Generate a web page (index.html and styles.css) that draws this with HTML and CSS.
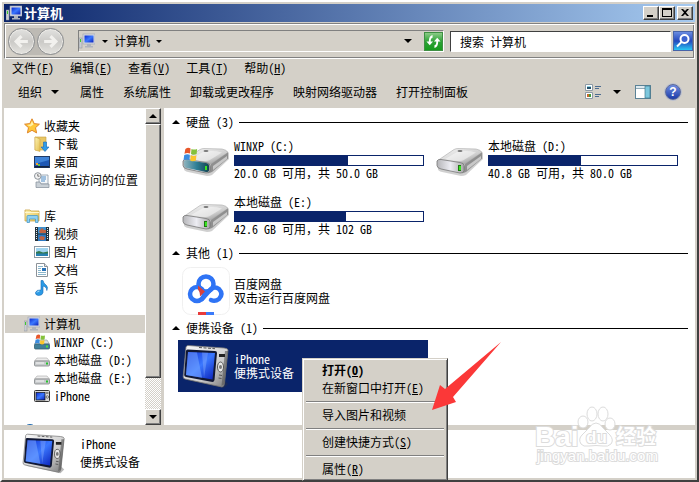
FILE: index.html
```html
<!DOCTYPE html>
<html lang="zh-CN">
<head>
<meta charset="UTF-8" />
<title>计算机</title>
<link rel="stylesheet" href="styles.css">
</head>
<body>

<!-- Shared icon symbols -->
<svg class="sprite" width="0" height="0" aria-hidden="true">
  <defs>
    <linearGradient id="screen" x1="0" y1="0" x2="1" y2="1">
      <stop offset="0" stop-color="#0d2bd0" /><stop offset=".5" stop-color="#3b78ff" /><stop offset="1" stop-color="#0a20b8" />
    </linearGradient>
    <linearGradient id="metal" x1="0" y1="0" x2="1" y2="1">
      <stop offset="0" stop-color="#fafafa" /><stop offset=".6" stop-color="#cfcfcf" /><stop offset="1" stop-color="#777" />
    </linearGradient>
    <linearGradient id="front" x1="0" y1="0" x2="1" y2="0">
      <stop offset="0" stop-color="#b5b5b8" /><stop offset=".5" stop-color="#ededf3" /><stop offset="1" stop-color="#a8a8a8" />
    </linearGradient>
    <linearGradient id="teal" x1="0" y1="0" x2="1" y2="0">
      <stop offset="0" stop-color="#8fb3bd" /><stop offset=".5" stop-color="#2f7f96" /><stop offset="1" stop-color="#144450" />
    </linearGradient>
    <linearGradient id="gold" x1="0" y1="0" x2="1" y2="1">
      <stop offset="0" stop-color="#fdf3b4" /><stop offset="1" stop-color="#e3bd4c" />
    </linearGradient>
  </defs>

  <symbol id="i-computer" viewBox="0 0 16 16">
    <rect x="0" y="5" width="3" height="10" fill="#c9ccd2" stroke="#8b8f96" stroke-width=".5" />
    <rect x="1" y="6" width="1" height="3" fill="#3ecb2c" />
    <rect x="4" y="1" width="12" height="10" fill="#d7dae2" stroke="#9aa0b0" stroke-width=".6" />
    <rect x="5.500" y="2.500" width="9" height="7" fill="url(#screen)" />
    <path d="M8 11h4v2h2v1.500H6V13h2z" fill="#aeb3bd" />
  </symbol>

  <symbol id="i-star" viewBox="0 0 16 16">
    <path d="M8 .8l2.200 4.800 5.200.6-3.900 3.500 1.100 5.200L8 12.300l-4.600 2.600 1.100-5.200L.6 6.200l5.200-.6z" fill="#ffc83a" stroke="#e0862a" />
    <path d="M8 3l1.500 3.500-3 2L3 7l3.400-.6z" fill="#fff0a8" />
  </symbol>

  <symbol id="i-download" viewBox="0 0 16 16">
    <path d="M1 1h11v13H1z" fill="#e9c765" stroke="#c89f3e" stroke-width=".6" />
    <path d="M1 1l5 2v12.500L1 14z" fill="url(#gold)" stroke="#c89f3e" stroke-width=".5" />
    <path d="M9.500 6h3v5H15l-4 4.500L7 11h2.500z" fill="#2f9be8" stroke="#1767b5" stroke-width=".6" />
  </symbol>

  <symbol id="i-desktop" viewBox="0 0 16 16">
    <rect x=".5" y="2.500" width="15" height="11" fill="#1d57b4" stroke="#203a66" />
    <path d="M1 3h14v3L1 10z" fill="#3f83d8" />
    <path d="M1 12h14v1.500H1z" fill="#14233f" />
    <path d="M2 9h2v2H2z" fill="#f4a02c" /><path d="M4 10h2v2H4z" fill="#5cc043" />
  </symbol>

  <symbol id="i-recent" viewBox="0 0 16 16">
    <path d="M5 3h9v9H5z" fill="#f4f7fa" stroke="#8d99a6" stroke-width=".8" />
    <path d="M7 5h5M7 7h5M7 9h4" stroke="#4e8cc6" />
    <path d="M2 10h4l1 2h8v3.500H2z" fill="#c9d0d6" stroke="#828d98" stroke-width=".7" />
    <circle cx="3.800" cy="4" r="3.300" fill="#f2f2f2" stroke="#8d949b" />
    <path d="M3.800 2v2.200h1.700" fill="none" stroke="#555" stroke-width=".8" />
  </symbol>

  <symbol id="i-library" viewBox="0 0 16 16">
    <path d="M1 2h5l1 1h8v10H1z" fill="url(#gold)" stroke="#cda545" stroke-width=".8" />
    <path d="M1 4.500h14" stroke="#fff7cf" />
    <path d="M3 14.500V8.500q0-1 1-1h9q1 0 1 1v6h-2.500V11h-6v3.500z" fill="#8fd0f2" stroke="#3c93c7" stroke-width=".7" />
  </symbol>

  <symbol id="i-video" viewBox="0 0 16 16">
    <rect x="1" y="1" width="14" height="14" fill="#25333d" />
    <rect x="4" y="1" width="8" height="6.500" fill="#3f91cf" /><rect x="4" y="8.500" width="8" height="6.500" fill="#2c79c3" />
    <path d="M5 5l3-3 2 2 2 0v3H6zM5 12l2-2 4 1-1 3H7z" fill="#c26342" />
    <path d="M2.500 2v12M13.500 2v12" stroke="#e4ecef" stroke-dasharray="1 1" />
  </symbol>

  <symbol id="i-picture" viewBox="0 0 16 16">
    <rect x=".5" y="2.500" width="15" height="11" fill="#fff" stroke="#8b98a3" />
    <rect x="2" y="4" width="12" height="8" fill="#9fd4f0" />
    <path d="M2 8l3-1 4 1.500 5-1V10H2z" fill="#33794f" /><path d="M2 9.500h12V12H2z" fill="#2781b2" />
  </symbol>

  <symbol id="i-document" viewBox="0 0 16 16">
    <path d="M2.500 1.500h8l3 3v10h-11z" fill="#fff" stroke="#8c9298" />
    <path d="M10.500 1.500v3h3" fill="#dfe5ea" stroke="#8c9298" />
    <path d="M4 4.500h5M4 6.500h3M4 8.500h3M4 10.500h8M4 12.500h8" stroke="#8bb6cb" />
    <rect x="8" y="6" width="4" height="3" fill="#2973b8" />
  </symbol>

  <symbol id="i-music" viewBox="0 0 16 16">
    <path d="M7 .5h2q.5 3 3 4.500 2.500 2 .8 5.500Q13 7 9 6v6.500q-.5 3-4.500 3Q1 15 1.500 12.500 2.500 9.500 7 10z" fill="#2b9be6" stroke="#1769b5" stroke-width=".6" />
    <path d="M3 12.500q.5-1.500 2.500-1.500" fill="none" stroke="#b9e4ff" />
  </symbol>

  <symbol id="i-flag" viewBox="0 0 16 16">
    <path d="M2 2q3-2 5.500-.5L7 7Q4 5.800 1 7.300z" fill="#e8572a" />
    <path d="M8.500 2q3 1.300 6 0L14 7.500q-3 1.500-6 0z" fill="#84c13b" />
    <path d="M.8 8.500q3-1.500 6-.3L6.300 14Q3 12.500 0 14z" fill="#3b8ce0" />
    <path d="M7.800 8.700q3 1.500 6 .2L13.200 14.500q-3 1.500-6-.2z" fill="#fbc52c" />
  </symbol>

  <symbol id="i-drive" viewBox="0 0 16 16">
    <path d="M3 6h10l2.500 3H.5z" fill="#ececec" stroke="#aaa" stroke-width=".6" />
    <rect x=".5" y="9" width="15" height="5" rx="1" fill="#c7cacc" stroke="#808486" stroke-width=".8" />
    <path d="M2 11h8" stroke="#f7f7f7" /><rect x="12" y="10.500" width="2" height="2" fill="#24c32a" />
  </symbol>

  <symbol id="i-windrive" viewBox="0 0 16 16">
    <path d="M3 6h10l2.500 4H.5z" fill="#d4dde1" stroke="#8c979c" stroke-width=".6" />
    <rect x=".5" y="10" width="15" height="5" rx="1" fill="#407f99" stroke="#365e6e" stroke-width=".8" />
    <rect x="12" y="11.500" width="2" height="2" fill="#4be03d" />
    <use href="#i-flag" x="1" y="0" width="11" height="11" />
  </symbol>

  <symbol id="i-player" viewBox="0 0 16 16">
    <rect x=".5" y="2.500" width="15" height="11" rx="1" fill="#dadada" stroke="#333" />
    <rect x="2" y="4.500" width="9" height="7.500" fill="url(#screen)" stroke="#111" stroke-width=".7" />
    <circle cx="13.300" cy="9" r="1.200" fill="#fff" stroke="#333" stroke-width=".7" /><path d="M12 5h2.500" stroke="#333" />
  </symbol>

  <symbol id="i-network" viewBox="0 0 16 16">
    <circle cx="6" cy="7" r="6.500" fill="#3690e3" stroke="#2169ae" />
  </symbol>

  <symbol id="b-drive" viewBox="0 0 48 48">
    <path d="M2 30l17-15q2-1 5-1h17q4 0 6 3v6L30 39q-2 1-5 1L6 36q-4-1-4-3z" fill="#777" opacity=".35" />
    <path d="M1 25l17-11.500q2-1 4-1l18 .5q4 .5 6 3.500L29 28q-2 1-5 1z" fill="url(#metal)" stroke="#aaa" stroke-width=".6" />
    <path d="M9 23l12-7q10-2 19 .5L27 24.500q-9 1.500-18-1.500z" fill="#fff" opacity=".45" />
    <path d="M29 28l17-11.500v6L30 36q-2 1-4 1z" fill="#8f8f8f" />
    <path d="M31 30l14-10v3L31 34z" fill="#c8c8c8" />
    <path d="M1 25q1-2 4-1.500l19 3q4 .5 4 3v5q0 3-4 2.500l-19-4q-4-1-4-3.500z" fill="url(#front)" stroke="#777" stroke-width=".8" />
    <rect x="22" y="29" width="3" height="6" fill="#1f7713" /><rect x="23" y="30" width="2" height="4" fill="#3ae321" />
    <ellipse cx="24" cy="15" rx="2.500" ry="1" fill="#777" />
  </symbol>

  <symbol id="b-player" viewBox="0 0 48 48">
    <path d="M4 38l38 8 4-4-3-3z" fill="#333" opacity=".35" />
    <path d="M4 5q.5-1.500 2-1.500L42 6q4 .5 4 2l-3.500 33q-.5 4-2.500 4L3 37q-2-.5-1.800-2.500z" fill="url(#metal)" stroke="#777" stroke-width=".8" />
    <path d="M43 9h3l-3.500 33-3 2z" fill="#555" opacity=".6" />
    <path d="M4 9q0-1.500 1.500-1.500L33 9q2 0 2 2l-2.500 27q-.5 2-2 2L4 35q-2-.5-1.800-2z" fill="#111834" />
    <path d="M6 10l27 1-2.500 26.500L4 33z" fill="url(#screen)" />
    <path d="M6 10l9 .4 5 25.300L4 33z" fill="#79a7ff" opacity=".55" />
    <path d="M20 10.600l6 .2-4 25z" fill="#a8c6ff" opacity=".3" />
    <path d="M17 5.500l16 1.200" stroke="#555" stroke-width="1" stroke-dasharray="3 1.500" />
    <rect x="37" y="12" width="6" height="3" fill="#222" />
    <ellipse cx="38.500" cy="25" rx="3" ry="5" fill="#e9e9e9" stroke="#555" /><ellipse cx="38.500" cy="25" rx="1.500" ry="2" fill="#777" />
    <path d="M37 33l3 .5M36.500 36l3 .5" stroke="#555" />
  </symbol>
</svg>

<div class="window">

  <header class="titlebar">
    <svg class="icon"><use href="#i-computer" /></svg>
    <h1>计算机</h1>
    <div class="window-buttons">
      <button type="button" aria-label="最小化"><svg viewBox="0 0 12 10"><path d="M2 7h6v2H2z" /></svg></button>
      <button type="button" aria-label="最大化"><svg viewBox="0 0 12 10"><path d="M1 0h10v9H1zM2 2v6h8V2z" fill-rule="evenodd" /></svg></button>
      <button type="button" class="close" aria-label="关闭"><svg viewBox="0 0 12 10"><path d="M2 1h2l2 2 2-2h2L7 4.500 10 8H8L6 6 4 8H2l3-3.500z" /></svg></button>
    </div>
  </header>

  <!-- Back / forward, address and search -->
  <div class="navbar">
    <div class="history">
      <button type="button" aria-label="后退"><svg viewBox="0 0 16 16"><path d="M8 3L3 8l5 5M4 8h10" /></svg></button>
      <button type="button" aria-label="前进"><svg viewBox="0 0 16 16"><path d="M8 3l5 5-5 5M2 8h10" /></svg></button>
    </div>
    <div class="address">
      <svg class="icon"><use href="#i-computer" /></svg>
      <span class="caret"></span>
      <a href="#">计算机</a>
      <span class="caret"></span>
      <button type="button" class="drop" aria-label="以前的位置"><span class="caret large"></span></button>
      <button type="button" class="refresh" aria-label="刷新">
        <svg viewBox="0 0 16 16"><path d="M7 1v3q-2 0-2 4h2.500L4 12 .5 8H3q0-6 4-7zM9 15v-3q2 0 2-4H8.500L12 4l3.500 4H13q0 6-4 7z" fill="#fff" /></svg>
      </button>
    </div>
    <form class="search">
      <input type="text" placeholder="搜索 计算机" aria-label="搜索 计算机">
      <button type="button" aria-label="搜索">
        <svg viewBox="0 0 16 16"><circle cx="9.500" cy="6" r="4" /><path d="M6.500 9L2 13.500" /></svg>
      </button>
    </form>
  </div>

  <nav class="menubar">
    <a href="#">文件(<u>F</u>)</a>
    <a href="#">编辑(<u>E</u>)</a>
    <a href="#">查看(<u>V</u>)</a>
    <a href="#">工具(<u>T</u>)</a>
    <a href="#">帮助(<u>H</u>)</a>
  </nav>

  <div class="toolbar">
    <button type="button" class="organize">组织<span class="caret large"></span></button>
    <button type="button">属性</button>
    <button type="button">系统属性</button>
    <button type="button">卸载或更改程序</button>
    <button type="button">映射网络驱动器</button>
    <button type="button">打开控制面板</button>
    <div class="tools">
      <button type="button" class="view" aria-label="更改视图">
        <svg class="icon" viewBox="0 0 16 16">
          <path d="M.5.500h7v6h-7zM.5 8.500h7v6h-7z" fill="#fff" stroke="#8c9aa5" />
          <path d="M2 2h4v1H2z" fill="#8fd2e6" /><path d="M2 3h4v2H2z" fill="#24506a" />
          <path d="M2 10h2v3H2z" fill="#c8672a" /><path d="M4 10h2v3H4z" fill="#3f9a3a" />
          <path d="M10 2.500h6M10 4.500h4M10 10.500h6M10 12.500h4" stroke="#4d6c90" />
        </svg>
        <span class="caret large"></span>
      </button>
      <button type="button" aria-label="预览窗格">
        <svg class="icon" viewBox="0 0 16 16">
          <rect x=".5" y="1.500" width="15" height="13" fill="#fff" stroke="#5b8296" />
          <path d="M1 2h9v2H1z" fill="#dfeaf0" /><path d="M1 4.500h9" stroke="#8fa9b6" />
          <path d="M10 2h5v12h-5z" fill="#7cc7dd" stroke="#41788e" stroke-width=".7" />
        </svg>
      </button>
      <button type="button" class="help" aria-label="帮助">?</button>
    </div>
  </div>

  <div class="main">
    <!-- Navigation tree -->
    <nav class="tree">
      <ul>
        <li><a href="#"><svg class="icon"><use href="#i-star" /></svg>收藏夹</a>
          <ul>
            <li><a href="#"><svg class="icon"><use href="#i-download" /></svg>下载</a></li>
            <li><a href="#"><svg class="icon"><use href="#i-desktop" /></svg>桌面</a></li>
            <li><a href="#"><svg class="icon"><use href="#i-recent" /></svg>最近访问的位置</a></li>
          </ul>
        </li>
        <li><a href="#"><svg class="icon"><use href="#i-library" /></svg>库</a>
          <ul>
            <li><a href="#"><svg class="icon"><use href="#i-video" /></svg>视频</a></li>
            <li><a href="#"><svg class="icon"><use href="#i-picture" /></svg>图片</a></li>
            <li><a href="#"><svg class="icon"><use href="#i-document" /></svg>文档</a></li>
            <li><a href="#"><svg class="icon"><use href="#i-music" /></svg>音乐</a></li>
          </ul>
        </li>
        <li><a href="#" class="current"><svg class="icon"><use href="#i-computer" /></svg>计算机</a>
          <ul>
            <li><a href="#"><svg class="icon"><use href="#i-windrive" /></svg>WINXP (C:)</a></li>
            <li><a href="#"><svg class="icon"><use href="#i-drive" /></svg>本地磁盘 (D:)</a></li>
            <li><a href="#"><svg class="icon"><use href="#i-drive" /></svg>本地磁盘 (E:)</a></li>
            <li><a href="#"><svg class="icon"><use href="#i-player" /></svg>iPhone</a></li>
          </ul>
        </li>
        <li><a href="#"><svg class="icon"><use href="#i-network" /></svg></a></li>
      </ul>
    </nav>
    <div class="scrollbar">
      <button type="button" aria-label="向上滚动"><span class="caret large up"></span></button>
      <div class="thumb"></div>
      <div class="track"></div>
      <button type="button" aria-label="向下滚动"><span class="caret large"></span></button>
    </div>

    <!-- Drives and devices -->
    <main class="content">
      <h2><span class="caret large up"></span>硬盘 (3)</h2>
      <div class="items">
        <div class="item">
          <svg class="big" viewBox="0 0 48 48">
            <use href="#b-drive" />
            <path d="M2 25q1-1 3-1l19 3q3 .5 3 3v4q0 2-3 2l-19-4q-3-.5-3-3z" fill="url(#teal)" />
            <rect x="23" y="30" width="2" height="4" fill="#3ae321" />
            <use href="#i-flag" x="1" y="11" width="16" height="15" />
          </svg>
          <div class="info">
            <p>WINXP (C:)</p>
            <div class="bar"><div class="used" style="width: 60%"></div></div>
            <p>20.0 GB 可用<span class="wide">，</span>共 50.0 GB</p>
          </div>
        </div>
        <div class="item">
          <svg class="big"><use href="#b-drive" /></svg>
          <div class="info">
            <p>本地磁盘 (D:)</p>
            <div class="bar"><div class="used" style="width: 49%"></div></div>
            <p>40.8 GB 可用<span class="wide">，</span>共 80.0 GB</p>
          </div>
        </div>
        <div class="item">
          <svg class="big"><use href="#b-drive" /></svg>
          <div class="info">
            <p>本地磁盘 (E:)</p>
            <div class="bar"><div class="used" style="width: 59%"></div></div>
            <p>42.6 GB 可用<span class="wide">，</span>共 102 GB</p>
          </div>
        </div>
      </div>

      <h2><span class="caret large up"></span>其他 (1)</h2>
      <div class="items">
        <div class="item">
          <svg class="big" viewBox="0 0 48 48">
            <rect x=".5" y=".5" width="47" height="47" rx="8" fill="#fff" stroke="#f0f0f0" />
            <g fill="none" stroke-width="4.500" stroke-linecap="round" stroke="#2f74f5">
              <circle cx="24" cy="17" r="7.500" />
              <circle cx="15" cy="27" r="7" />
              <path d="M20 32l9-10q4-3 8 0 5 5 0 10-4 3-8 1" />
            </g>
            <path d="M16 18.500l7 6-5 5q0-5-2-7z" fill="#d8403a" />
            <path d="M16 45h8v3h-8z" fill="#e83b3b" /><path d="M24 45h8v3h-8z" fill="#3b7bfa" />
          </svg>
          <div class="info">
            <p>百度网盘</p>
            <p>双击运行百度网盘</p>
          </div>
        </div>
      </div>

      <h2><span class="caret large up"></span>便携设备 (1)</h2>
      <div class="items">
        <div class="item selected">
          <svg class="big"><use href="#b-player" /></svg>
          <div class="info">
            <p>iPhone</p>
            <p>便携式设备</p>
          </div>
        </div>
      </div>
    </main>
  </div>

  <footer class="details">
    <svg class="device"><use href="#b-player" /></svg>
    <div>
      <p>iPhone</p>
      <p>便携式设备</p>
    </div>
  </footer>
</div>

<!-- Context menu for the selected device -->
<div class="context-menu" role="menu">
  <button type="button" role="menuitem" class="default">打开(<u>O</u>)</button>
  <button type="button" role="menuitem">在新窗口中打开(<u>E</u>)</button>
  <hr>
  <button type="button" role="menuitem">导入图片和视频</button>
  <hr>
  <button type="button" role="menuitem">创建快捷方式(<u>S</u>)</button>
  <hr>
  <button type="button" role="menuitem">属性(<u>R</u>)</button>
</div>

<svg class="pointer" viewBox="0 0 70 70" aria-hidden="true">
  <path d="M0 68L8 43l5 4L69 0 21 55l3 5z" fill="#fb3838" />
</svg>

<svg class="watermark" viewBox="0 0 136 72" aria-hidden="true">
  <ellipse cx="62" cy="14" rx="5" ry="7" /><ellipse cx="73" cy="14" rx="5" ry="7" />
  <ellipse cx="53" cy="22" rx="5" ry="6" /><ellipse cx="80" cy="24" rx="5" ry="6" />
  <path d="M66 23q4 0 7 5l7 7q4 5 1 9-3 3-8 2-7-1-14 0-6 1-8-2-3-5 1-9l7-7q3-5 7-5z" />
  <text class="brand" x="5" y="46">Bai</text>
  <text class="brand du" x="56" y="43">du</text>
  <text class="brand cn" x="86" y="44">经验</text>
  <text class="site" x="7" y="61">jingyan.baidu.com</text>
</svg>

</body>
</html>
```

FILE: styles.css
```css
* {
  box-sizing: border-box;
}

body {
  margin: 0;
  position: relative;
  font-family: "Noto Sans CJK SC", sans-serif;
  font-feature-settings: "hwid"; /* half-width latin, as in a bitmap UI font */
  font-size: 12px;
  line-height: 18px;
  color: #000;
  background: #d4d0c8;
}

button {
  font: inherit;
  font-feature-settings: inherit;
  color: inherit;
  padding: 0;
  border: 0;
  background: none;
}

a {
  color: inherit;
  text-decoration: none;
}

p, h1, h2, ul {
  margin: 0;
  padding: 0;
}

ul {
  list-style: none;
}

.sprite {
  position: absolute;
}

.icon {
  width: 16px;
  height: 16px;
  flex: none;
}

.wide {
  font-feature-settings: normal;
}

/* Small triangles */
.caret {
  display: inline-block;
  flex: none;
  border: 3px solid transparent;
  border-top-color: #000;
  border-bottom: 0;
}

.caret.large {
  border-width: 4px;
  border-bottom: 0;
}

.caret.up {
  border-top: 0;
  border-bottom: 4px solid #000;
}

/* Window frame */
.window {
  height: 100vh;
  display: flex;
  flex-direction: column;
  padding: 2px;
  border: 2px solid;
  border-color: #fff #404040 #404040 #fff;
  background: #d4d0c8;
}

.titlebar {
  display: flex;
  align-items: center;
  gap: 2px;
  height: 18px;
  padding: 0 2px;
  color: #fff;
  background: linear-gradient(to right, #0a246a, #a6caf0);
}

.titlebar h1 {
  flex: 1;
  font-size: 13px;
  line-height: 18px;
}

.window-buttons {
  display: flex;
}

.window-buttons button {
  display: flex;
  width: 16px;
  height: 14px;
  padding: 1px;
}

.window-buttons svg {
  width: 12px;
  height: 10px;
}

.window-buttons .close {
  margin-left: 2px;
}

.window-buttons button,
.scrollbar button,
.thumb {
  border: 1px solid;
  border-color: #fff #404040 #404040 #fff;
  box-shadow: inset -1px -1px #808080;
  background: #d4d0c8;
}

/* Address row */
.navbar {
  display: flex;
  align-items: center;
  height: 36px;
  margin-top: 1px;
  padding: 0 1px 0 3px;
  border: 1px solid;
  border-color: #808080 #fff #fff #808080;
  box-shadow: inset 1px 1px #fff, inset -1px -1px #808080;
}

.history {
  display: flex;
  gap: 2px;
  margin-right: 14px;
  border-radius: 13px;
  background: #bdbab4;
}

.history button {
  width: 27px;
  height: 27px;
  padding: 4px;
  border: 1px solid #8e9092;
  border-radius: 50%;
  background: linear-gradient(#e2e2e0, #cbcac7 50%, #e4e3df);
  box-shadow: inset 0 0 0 1px #eceae6;
}

.history svg {
  display: block;
  fill: none;
  stroke: #f2f1ee;
  stroke-width: 3;
}

.address {
  flex: 1;
  display: flex;
  align-items: center;
  height: 22px;
  border: 1px solid;
  border-color: #808080 #fff #fff #808080;
}

.address .icon {
  margin-right: 7px;
}

.address a {
  margin: 0 6px;
}

.drop {
  display: flex;
  margin: 0 12px 0 auto;
}

.refresh {
  display: flex;
  width: 19px;
  height: 19px;
  padding: 1px;
  border: 1px solid #3f8f43;
  background: linear-gradient(#8bcb87, #2da236 50%, #169c1d);
}

.refresh svg {
  width: 15px;
  height: 15px;
}

.search {
  display: flex;
  align-items: center;
  gap: 2px;
  margin-left: 6px;
}

.search input {
  width: 221px;
  height: 21px;
  padding: 0 9px;
  border: 1px solid;
  border-color: #404040 #fff #fff #404040;
  font: inherit;
  font-feature-settings: inherit;
  background: #fff;
}

.search input::placeholder {
  color: #000;
}

.search button {
  display: flex;
  width: 20px;
  height: 20px;
  padding: 1px;
  border: 1px solid #4763a8;
  background: linear-gradient(#6a8ce0, #2348bd 50%, #29c7f3);
}

.search svg {
  fill: #3c63cf;
  stroke: #fff;
  stroke-width: 2;
}

.menubar {
  display: flex;
  gap: 16px;
  padding: 0 8px;
}

.toolbar {
  display: flex;
  align-items: center;
  gap: 19px;
  height: 31px;
  padding: 0 14px 2px;
}

.organize,
.view {
  display: flex;
  align-items: center;
  gap: 9px;
}

.organize {
  margin-right: 2px;
}

.tools {
  display: flex;
  align-items: center;
  gap: 14px;
  margin-left: auto;
}

.view {
  gap: 12px;
}

.tools .icon {
  display: block;
}

.help {
  width: 16px;
  height: 16px;
  border: 1px solid #5b6a9b;
  border-radius: 50%;
  font: bold 12px/14px "Liberation Sans", sans-serif;
  color: #fff;
  background: linear-gradient(#6f8ce0, #1c3ba8);
  box-shadow: 0 0 0 1px #b9bfcf;
}

/* Tree and content */
.main {
  flex: 1;
  display: flex;
  min-height: 0;
}

.tree {
  width: 141px;
  padding: 9px 0 0 1px;
  overflow: hidden;
  background: #fff;
}

.tree a {
  display: flex;
  align-items: center;
  gap: 4px;
  height: 18px;
  padding-left: 19px;
  white-space: nowrap;
}

.tree ul ul {
  padding-bottom: 18px;
}

.tree ul ul a {
  padding-left: 29px;
}

.tree .current {
  background: #d4d0c8;
}

.scrollbar {
  display: flex;
  flex-direction: column;
  width: 16px;
  margin-right: 3px;
}

.scrollbar button {
  display: flex;
  justify-content: center;
  align-items: center;
  height: 16px;
}

.thumb {
  flex: 8;
}

.track {
  flex: 1;
  background: repeating-conic-gradient(#fff 0 25%, #d4d0c8 0 50%) 0 0 / 2px 2px;
}

.content {
  flex: 1;
  min-width: 0;
  padding: 3px 7px 0 8px;
  overflow: hidden;
  background: #fff;
}

.content h2 {
  display: flex;
  align-items: center;
  height: 23px;
  padding-bottom: 1px;
  font-size: 12px;
  font-weight: normal;
}

.content h2 .caret {
  margin-right: 6px;
}

.content h2::after {
  content: "";
  flex: 1;
  height: 1px;
  margin-left: 5px;
  background: #000;
}

.items {
  display: grid;
  grid-template-columns: repeat(auto-fill, 250px);
  gap: 4px;
  padding-left: 6px;
}

.item {
  display: flex;
  align-items: center;
  gap: 4px;
  height: 52px;
  padding: 0 4px;
}

.item.selected {
  color: #fff;
  background: #0a246a;
}

.big {
  flex: none;
  width: 48px;
  height: 48px;
}

.info {
  flex: 1;
  padding-bottom: 1px;
  line-height: 14px;
}

.bar {
  height: 11px;
  margin-top: 2px;
  border: 1px solid #0a246a;
  background: #fff;
}

.used {
  height: 100%;
  background: #0a246a;
}

.details {
  display: flex;
  align-items: center;
  gap: 14px;
  height: 48px;
  margin-top: 5px;
  padding: 0 18px 2px;
  background: #fff;
}

.device {
  width: 44px;
  height: 44px;
}

/* Context menu floats over the window */
.context-menu {
  position: absolute;
  left: 302px;
  top: 358px;
  width: 146px;
  padding: 2px 3px;
  border: 1px solid;
  border-color: #d4d0c8 #404040 #404040 #d4d0c8;
  box-shadow: inset 1px 1px #fff, inset -1px -1px #808080;
  background: #d4d0c8;
}

.context-menu button {
  display: block;
  width: 100%;
  height: 18px;
  padding-left: 16px;
  text-align: left;
  white-space: nowrap;
}

.context-menu .default {
  font-weight: bold;
}

.context-menu hr {
  height: 2px;
  margin: 4px 0 3px;
  border: 0;
  border-top: 1px solid #808080;
  border-bottom: 1px solid #fff;
}

.pointer {
  position: absolute;
  left: 432px;
  top: 342px;
  width: 70px;
  height: 70px;
}

.watermark {
  position: absolute;
  right: 33px;
  bottom: 10px;
  width: 136px;
  height: 72px;
  fill: #fff;
  stroke: #dcdcdc;
  font-family: "Liberation Sans", "Noto Sans CJK SC", sans-serif;
  font-feature-settings: normal;
  font-weight: bold;
}

.watermark text {
  stroke-width: 2px;
  paint-order: stroke;
}

.brand {
  font-size: 28px;
}

.brand.du {
  font-size: 17px;
}

.brand.cn {
  font-size: 20px;
}

.site {
  font-size: 15px;
  font-weight: normal;
}
```
